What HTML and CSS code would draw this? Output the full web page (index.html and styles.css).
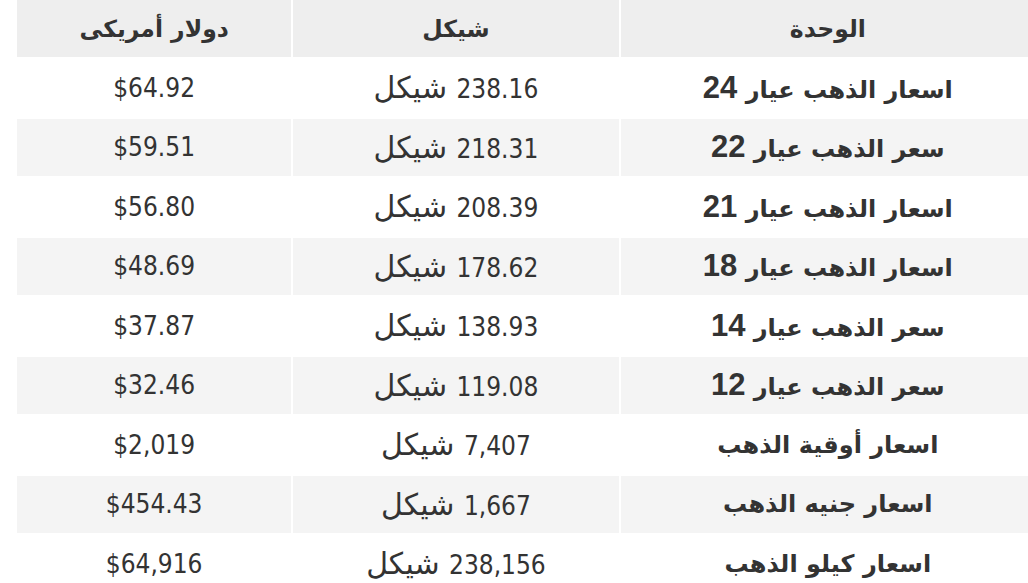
FILE: index.html
```html
<!DOCTYPE html>
<html lang="ar" dir="rtl">
<head>
<meta charset="utf-8">
<title>أسعار الذهب</title>
<link rel="stylesheet" href="styles.css">
</head>
<body>
<div class="wrap">
<table class="prices">
  <thead>
    <tr>
      <th class="unit">الوحدة</th>
      <th>شيكل</th>
      <th>دولار أمريكى</th>
    </tr>
  </thead>
  <tbody>
    <tr><td class="unit">اسعار الذهب عيار <span class="num">24</span></td><td>238.16 <span class="cur">شيكل</span></td><td>$64.92</td></tr>
    <tr><td class="unit">سعر الذهب عيار <span class="num">22</span></td><td>218.31 <span class="cur">شيكل</span></td><td>$59.51</td></tr>
    <tr><td class="unit">اسعار الذهب عيار <span class="num">21</span></td><td>208.39 <span class="cur">شيكل</span></td><td>$56.80</td></tr>
    <tr><td class="unit">اسعار الذهب عيار <span class="num">18</span></td><td>178.62 <span class="cur">شيكل</span></td><td>$48.69</td></tr>
    <tr><td class="unit">سعر الذهب عيار <span class="num">14</span></td><td>138.93 <span class="cur">شيكل</span></td><td>$37.87</td></tr>
    <tr><td class="unit">سعر الذهب عيار <span class="num">12</span></td><td>119.08 <span class="cur">شيكل</span></td><td>$32.46</td></tr>
    <tr><td class="unit">اسعار أوقية الذهب</td><td>7,407 <span class="cur">شيكل</span></td><td>$2,019</td></tr>
    <tr><td class="unit">اسعار جنيه الذهب</td><td>1,667 <span class="cur">شيكل</span></td><td>$454.43</td></tr>
    <tr><td class="unit">اسعار كيلو الذهب</td><td>238,156 <span class="cur">شيكل</span></td><td>$64,916</td></tr>
  </tbody>
</table>
</div>
</body>
</html>
```

FILE: styles.css
```css
html, body {
  margin: 0;
  padding: 0;
  background: #ffffff;
  overflow: hidden;
}

.wrap {
  width: 1028px;
  height: 583px;
  overflow: hidden;
  position: relative;
}

.prices {
  direction: rtl;
  border-collapse: separate;
  border-spacing: 2px;
  width: 1022px;
  margin: -2px -9px 0 0;
  margin-left: 15px;
  table-layout: fixed;
  color: #333333;
  font-family: "DejaVu Sans Condensed", "DejaVu Sans", sans-serif;
  font-size: 26px;
}

.prices th:nth-child(1) { width: 414px; }
.prices th:nth-child(2) { width: 325px; }
.prices th:nth-child(3) { width: 274px; }

.prices th,
.prices td {
  text-align: center;
  vertical-align: middle;
  padding: 0 8px;
  height: 57.5px;
  box-sizing: border-box;
  white-space: nowrap;
}

.prices th {
  background: #eeeeee;
  font-weight: bold;
  font-family: "DejaVu Sans", sans-serif;
  font-size: 23.5px;
  height: 57px;
}

.prices tbody tr:nth-child(odd) td { background: #ffffff; }
.prices tbody tr:nth-child(even) td { background: #f4f4f4; }

.prices .cur {
  font-family: "DejaVu Sans", sans-serif;
  font-size: 30px;
  margin-right: 2px;
}

.prices tbody td.unit {
  background: #eeeeee;
  font-weight: bold;
  font-family: "DejaVu Sans", sans-serif;
  font-size: 24px;
}

.prices .num {
  font-family: "Liberation Sans", Arial, sans-serif;
  font-size: 31px;
  font-weight: bold;
}
```
